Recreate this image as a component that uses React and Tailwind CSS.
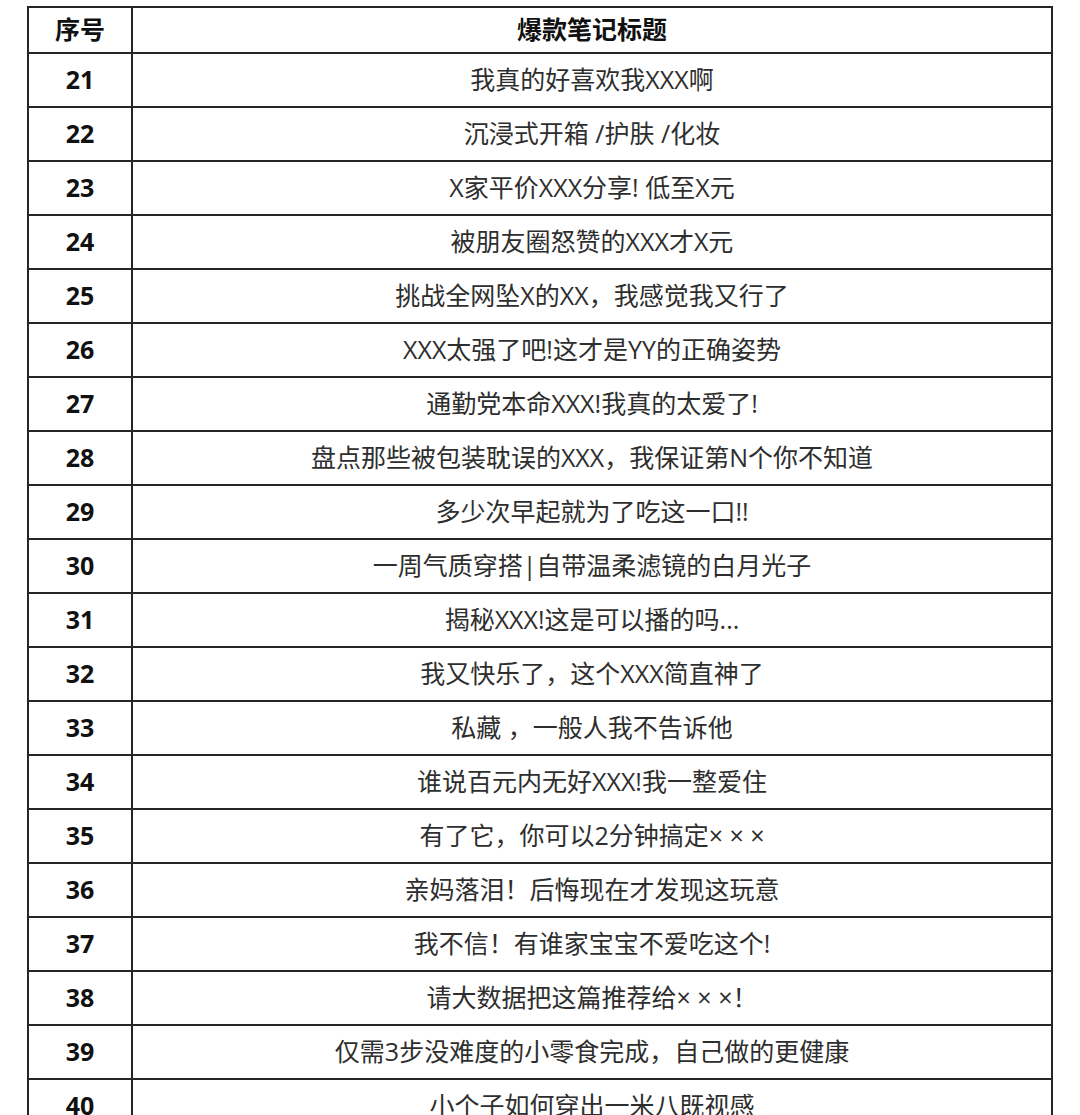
const rows = [
  [21, "我真的好喜欢我XXX啊"],
  [22, "沉浸式开箱 /护肤 /化妆"],
  [23, "X家平价XXX分享! 低至X元"],
  [24, "被朋友圈怒赞的XXX才X元"],
  [25, "挑战全网坠X的XX，我感觉我又行了"],
  [26, "XXX太强了吧!这才是YY的正确姿势"],
  [27, "通勤党本命XXX!我真的太爱了!"],
  [28, "盘点那些被包装耽误的XXX，我保证第N个你不知道"],
  [29, "多少次早起就为了吃这一口!!"],
  [30, "一周气质穿搭|自带温柔滤镜的白月光子"],
  [31, "揭秘XXX!这是可以播的吗..."],
  [32, "我又快乐了，这个XXX简直神了"],
  [33, "私藏 ，一般人我不告诉他"],
  [34, "谁说百元内无好XXX!我一整爱住"],
  [35, "有了它，你可以2分钟搞定× × ×"],
  [36, "亲妈落泪！后悔现在才发现这玩意"],
  [37, "我不信！有谁家宝宝不爱吃这个!"],
  [38, "请大数据把这篇推荐给× × ×！"],
  [39, "仅需3步没难度的小零食完成，自己做的更健康"],
  [40, "小个子如何穿出一米八既视感"],
];

export default function App() {
  return (
    <div className="w-[1080px] h-[1115px] overflow-hidden bg-white pt-[6px] pl-[27px] font-['Open_Sans','Noto_Sans_CJK_SC',sans-serif]">
      <div className="w-[1026px] border-t-2 border-x-2 border-[#262626]">
        {/* 表头 */}
        <div className="grid grid-cols-[104px_1fr] h-[46px] border-b-2 border-[#262626]">
          <div className="flex items-center justify-center border-r-2 border-[#262626] text-[25px] font-bold text-[#111]">
            序号
          </div>
          <div className="flex items-center justify-center text-[25px] font-bold text-[#111]">
            爆款笔记标题
          </div>
        </div>

        {rows.map(([no, title]) => (
          <div
            key={no}
            className="grid grid-cols-[104px_1fr] h-[54px] border-b-2 border-[#262626]"
          >
            <div className="flex items-center justify-center border-r-2 border-[#262626] text-[25px] font-bold text-[#111]">
              {no}
            </div>
            <div className="flex items-center justify-center text-[25px] text-[#2e2e2e]">
              {title}
            </div>
          </div>
        ))}
      </div>
    </div>
  );
}
